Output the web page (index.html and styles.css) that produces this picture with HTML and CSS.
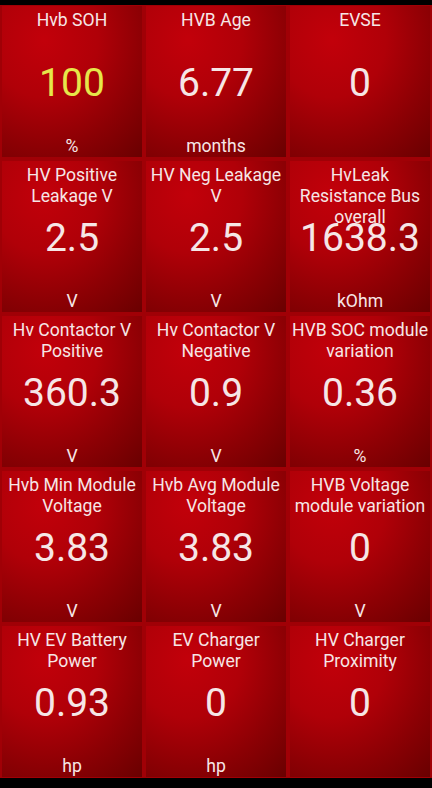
FILE: index.html
```html
<!DOCTYPE html>
<html>
<head>
<meta charset="utf-8">
<link rel="stylesheet" href="styles.css">
</head>
<body>
<div class="screen">
  <div class="grid">
    <div class="cell"><div class="title">Hvb SOH</div><div class="value yellow">100</div><div class="unit">%</div></div>
    <div class="cell"><div class="title">HVB Age</div><div class="value">6.77</div><div class="unit">months</div></div>
    <div class="cell"><div class="title">EVSE</div><div class="value">0</div><div class="unit"></div></div>

    <div class="cell"><div class="title">HV Positive<br>Leakage V</div><div class="value">2.5</div><div class="unit">V</div></div>
    <div class="cell"><div class="title">HV Neg Leakage<br>V</div><div class="value">2.5</div><div class="unit">V</div></div>
    <div class="cell"><div class="title">HvLeak<br>Resistance Bus<br>overall</div><div class="value">1638.3</div><div class="unit">kOhm</div></div>

    <div class="cell"><div class="title">Hv Contactor V<br>Positive</div><div class="value">360.3</div><div class="unit">V</div></div>
    <div class="cell"><div class="title">Hv Contactor V<br>Negative</div><div class="value">0.9</div><div class="unit">V</div></div>
    <div class="cell"><div class="title">HVB SOC module<br>variation</div><div class="value">0.36</div><div class="unit">%</div></div>

    <div class="cell"><div class="title">Hvb Min Module<br>Voltage</div><div class="value">3.83</div><div class="unit">V</div></div>
    <div class="cell"><div class="title">Hvb Avg Module<br>Voltage</div><div class="value">3.83</div><div class="unit">V</div></div>
    <div class="cell"><div class="title">HVB Voltage<br>module variation</div><div class="value">0</div><div class="unit">V</div></div>

    <div class="cell"><div class="title">HV EV Battery<br>Power</div><div class="value">0.93</div><div class="unit">hp</div></div>
    <div class="cell"><div class="title">EV Charger<br>Power</div><div class="value">0</div><div class="unit">hp</div></div>
    <div class="cell"><div class="title">HV Charger<br>Proximity</div><div class="value">0</div><div class="unit"></div></div>
  </div>
</div>
</body>
</html>
```
FILE: styles.css
```css
html, body {
  margin: 0;
  padding: 0;
  background: #000;
}
.screen {
  width: 432px;
  height: 788px;
  padding-top: 5px;
  box-sizing: border-box;
  background: #000;
  font-family: Roboto, "Noto Sans", sans-serif;
}
.grid {
  display: grid;
  grid-template-columns: repeat(3, 140px);
  grid-template-rows: repeat(5, 151px);
  column-gap: 4px;
  row-gap: 4px;
  padding: 1px 2px 1px 2px;
  background: #a00006;
}
.cell {
  display: grid;
  grid-template-rows: 50px 46px 1fr;
  padding-top: 4px;
  box-sizing: border-box;
  text-align: center;
  color: #f6e6e6;
  background: radial-gradient(ellipse 110% 110% at 30% 22%, #c2000a 0%, #b00008 35%, #8c0004 65%, #640000 100%);
}
.title {
  font-size: 17.6px;
  line-height: 21px;
  white-space: nowrap;
  overflow: visible;
}
.value {
  font-size: 39px;
  line-height: 46px;
  align-self: center;
}
.value.yellow {
  color: #e6e64a;
}
.unit {
  font-size: 17.6px;
  line-height: 21px;
  align-self: end;
}
```
